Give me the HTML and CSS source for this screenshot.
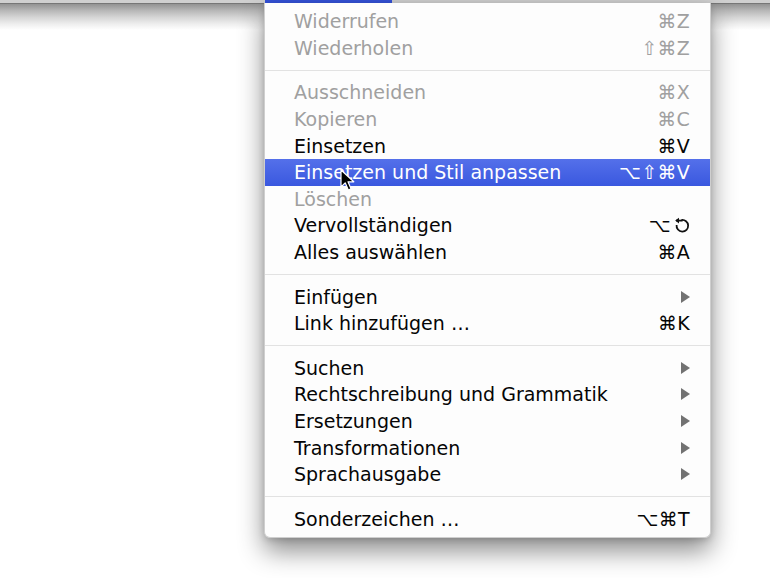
FILE: index.html
```html
<!DOCTYPE html>
<html lang="de">
<head>
    <meta charset="UTF-8">
    <title>Bearbeiten</title>
    <link rel="stylesheet" href="styles.css">
</head>
<body>
    <div class="menubar">
        <span class="menubar-title"></span>
    </div>

    <div class="menu">
        <div class="item disabled"><span>Widerrufen</span><span class="keys">⌘Z</span></div>
        <div class="item disabled"><span>Wiederholen</span><span class="keys">⇧⌘Z</span></div>
        <div class="sep"></div>
        <div class="item disabled"><span>Ausschneiden</span><span class="keys">⌘X</span></div>
        <div class="item disabled"><span>Kopieren</span><span class="keys">⌘C</span></div>
        <div class="item"><span>Einsetzen</span><span class="keys">⌘V</span></div>
        <div class="item selected">
            <span>Einsetzen und Stil anpassen</span><span class="keys">⌥⇧⌘V</span>
            <svg class="cursor" width="15" height="23" viewBox="0 0 15 23">
                <path d="M1 1 L1 18 L5.2 13.8 L8.3 21 L11 19.8 L8 12.8 L13.8 12.8 Z" fill="#000" stroke="#fff" stroke-width="1.2" stroke-linejoin="round"/>
            </svg>
        </div>
        <div class="item disabled"><span>Löschen</span><span class="keys"></span></div>
        <div class="item">
            <span>Vervollständigen</span>
            <span class="keys">⌥<svg class="esc" width="16" height="17" viewBox="0 0 16 17"><path d="M7.5 3 A5.8 5.8 0 1 1 2.6 8" fill="none" stroke="#111" stroke-width="1.8"/><path d="M2 3.6 L8.6 3.6" stroke="#111" stroke-width="1.8"/><path d="M1.2 3.6 L5 0.8 L5 6.4 Z" fill="#111"/></svg></span>
        </div>
        <div class="item"><span>Alles auswählen</span><span class="keys">⌘A</span></div>
        <div class="sep"></div>
        <div class="item"><span>Einfügen</span><span class="arrow"></span></div>
        <div class="item"><span>Link hinzufügen …</span><span class="keys">⌘K</span></div>
        <div class="sep"></div>
        <div class="item"><span>Suchen</span><span class="arrow"></span></div>
        <div class="item"><span>Rechtschreibung und Grammatik</span><span class="arrow"></span></div>
        <div class="item"><span>Ersetzungen</span><span class="arrow"></span></div>
        <div class="item"><span>Transformationen</span><span class="arrow"></span></div>
        <div class="item"><span>Sprachausgabe</span><span class="arrow"></span></div>
        <div class="sep"></div>
        <div class="item"><span>Sonderzeichen …</span><span class="keys">⌥⌘T</span></div>
    </div>
</body>
</html>
```

FILE: styles.css
```css
html { background: #fff; }
body { margin: 0; min-height: 578px; background: #fff; font-family: "DejaVu Sans", Verdana, sans-serif; }

/* menu bar strip plus the shade it throws on the page */
.menubar { height: 30px; display: flex; align-items: flex-start; background-color: #fff; background-image: linear-gradient(to bottom, #d0d0d0 0px, #d0d0d0 3px, #777 3px, #777 4px, #939393 4px, #b4b4b4 10px, #d4d4d4 17px, #eeeeee 24px, #fff 30px); }
.menubar-title { margin-left: 265px; width: 127px; height: 3px; background: #3552d8; }

.menu { position: relative; margin: -27px 0 0 264px; width: 447px; box-sizing: border-box; padding: 5px 0; background: #fdfdfd; border: 1px solid #cfcfcf; border-top: none; border-radius: 0 0 6px 6px; box-shadow: 0 13px 26px rgba(0,0,0,0.45), 0 2px 6px rgba(0,0,0,0.15); }

.item { display: flex; justify-content: space-between; align-items: center; height: 26.6px; padding: 0 20px 0 29px; font-size: 19px; color: #050505; position: relative; }
.item.disabled { color: #a0a0a0; }
.item.selected { background: linear-gradient(#5470ea, #3a58df); color: #fff; }

.keys { display: flex; align-items: center; letter-spacing: 0.3px; }
.esc { margin-left: 3px; }

.arrow { width: 0; height: 0; border-top: 6px solid transparent; border-bottom: 6px solid transparent; border-left: 9px solid #727272; }

.sep { height: 18px; display: flex; align-items: center; }
.sep::before { content: ""; flex: 1; height: 1px; background: #e2e2e2; }

.cursor { position: absolute; left: 75px; top: 10px; }
```
